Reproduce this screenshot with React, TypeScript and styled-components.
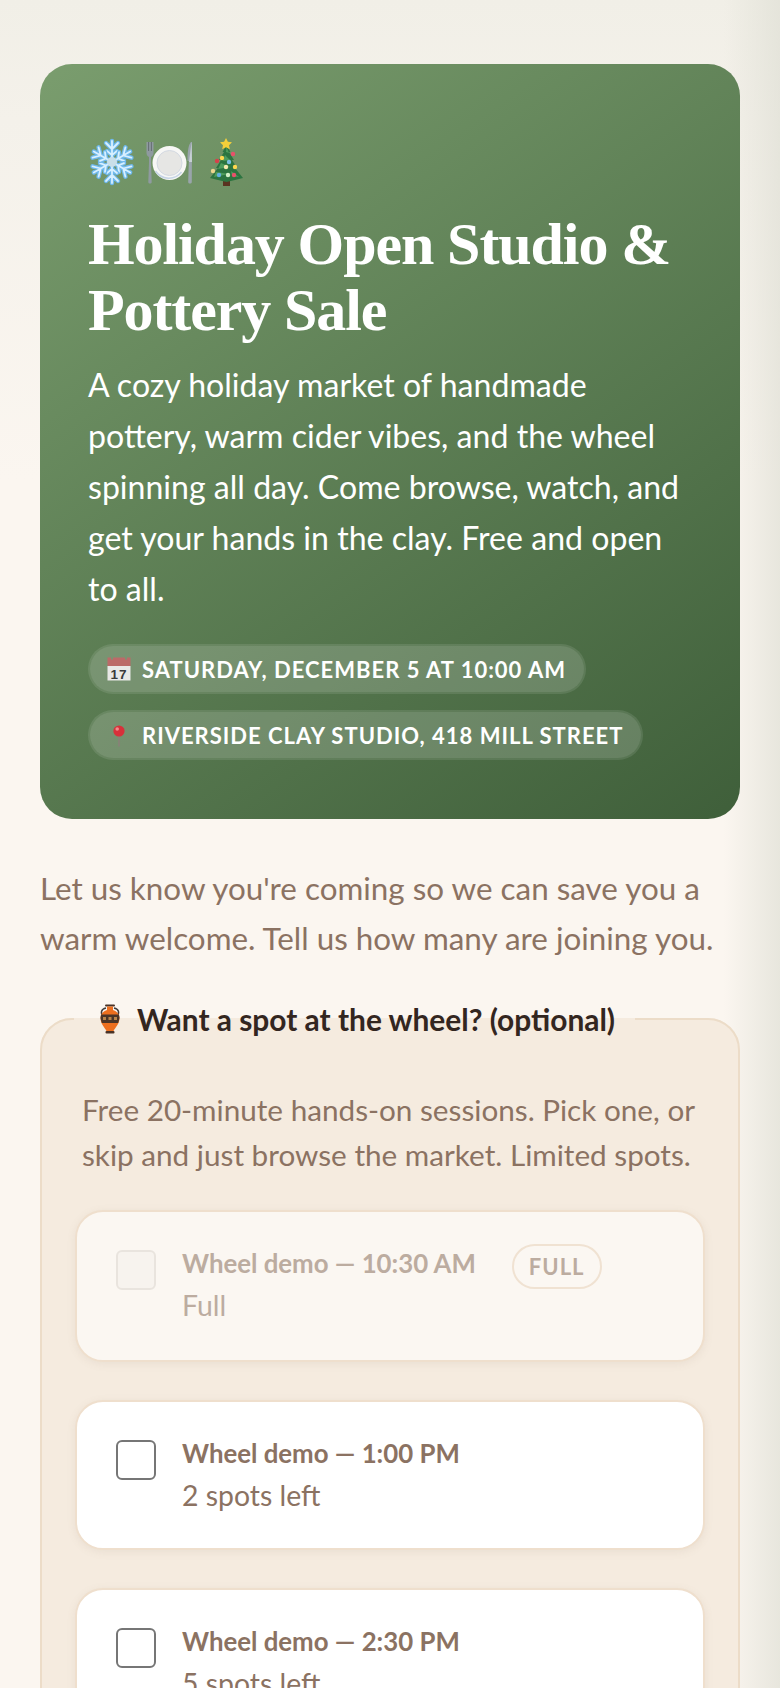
import styled, { createGlobalStyle } from 'styled-components'

const GlobalStyle = createGlobalStyle`
  * {
    box-sizing: border-box;
  }
  html,
  body {
    margin: 0;
    padding: 0;
    background: #fbf6f0;
  }
`

const Snowflake = () => {
  const arms = [0, 60, 120, 180, 240, 300]
  return (
    <EmojiSvg viewBox="0 0 48 48" size={48}>
      {arms.map((deg) => (
        <g key={deg} transform={`rotate(${deg} 24 24)`} fill="none" strokeLinecap="round">
          <path d="M24 24V3M24 11l-6-6M24 11l6-6M24 17l-5-4M24 17l5-4" stroke="#6fb9ec" strokeWidth="4.4" />
          <path d="M24 24V3M24 11l-6-6M24 11l6-6M24 17l-5-4M24 17l5-4" stroke="#d8f0ff" strokeWidth="1.8" />
        </g>
      ))}
      <circle cx="24" cy="24" r="5" fill="#c9dfe9" />
    </EmojiSvg>
  )
}

const PlateSet = () => (
  <EmojiSvg viewBox="0 0 48 48" size={48}>
    <path d="M1.500 4v11c0 2.500 1.500 3.500 2.500 4v5l-.7 20c0 2 3.400 2 3.400 0L6 24v-5c1-.5 2.500-1.500 2.500-4V4" fill="#8f9aa0" />
    <path d="M3.600 4v9M6.400 4v9" stroke="#5f686d" strokeWidth=".9" />
    <circle cx="24.500" cy="25" r="17" fill="#f7f7f5" />
    <circle cx="24.500" cy="25" r="12.500" fill="#e6e6e4" stroke="#d3d9e2" />
    <path d="M10.500 33a16 16 0 0 0 26 1" fill="none" stroke="#c6d4e6" strokeWidth="1.400" />
    <path d="M46 4c-2 2-3.500 7-3.500 19h1.300l-.6 21c0 2 3.600 2 3.600 0L47 4z" fill="#99a4ab" />
    <path d="M46.600 4 47 24h-3z" fill="#c7d0d5" />
  </EmojiSvg>
)

const Tree = () => {
  const balls: [number, number, string][] = [
    [31, 16, '#e8506a'],
    [20, 20, '#ffd84f'],
    [15, 23, '#d8404a'],
    [27, 24, '#79bde0'],
    [24, 29, '#f6eab0'],
    [33, 29, '#ffd84f'],
    [11, 33, '#ecd68e'],
    [17, 37, '#62b0e0'],
    [26, 37, '#d4f0c8'],
    [32, 37, '#e8506a'],
  ]
  return (
    <EmojiSvg viewBox="0 0 48 48" size={48}>
      <rect x="21" y="41" width="7" height="7" fill="#5a3320" />
      <path d="M24.500 7 28.500 14H27L32 22H30L35 30H33L41 40 33 42 24.500 44 16 42 8 40 16 30H14L19 22H17L22 14H20.500z" fill="#2c7440" />
      <path d="M24.500 9 27 15l-3-1zM23 17l5 5-7 1zM19 25l9 4-12 2zM14 34l13 2-15 3zM29 33l8 6-7-1z" fill="#4f9c5c" />
      <path d="m24 0 1.900 3.800 4.100.5-3 2.900.8 4.100-3.800-2-3.800 2 .8-4.100-3-2.900 4.100-.5z" fill="#f5cf3a" />
      {balls.map(([cx, cy, fill]) => (
        <circle key={`${cx}-${cy}`} cx={cx} cy={cy} r="2.200" fill={fill} />
      ))}
    </EmojiSvg>
  )
}

const CalendarGlyph = () => (
  <EmojiSvg viewBox="0 0 24 24" size={24}>
    <rect x="0.500" y="9" width="23" height="14.500" fill="#e8e8e6" />
    <path d="M.5.500h3.500v2h2v-2h12v2h2v-2h3.500V9H.5z" fill="#bb6a68" />
    <text x="12" y="21.500" textAnchor="middle" fontFamily="'Liberation Sans', sans-serif" fontSize="13.500" fill="#3a3a3a">
      17
    </text>
  </EmojiSvg>
)

const PinGlyph = () => (
  <EmojiSvg viewBox="0 0 24 24" size={24}>
    <path d="M12 12v11" stroke="#8a8078" strokeWidth="1.600" strokeLinecap="round" />
    <circle cx="12" cy="8" r="5.600" fill="#d8303a" />
    <circle cx="10.200" cy="6" r="1.800" fill="#f08a8a" />
  </EmojiSvg>
)

const Amphora = () => (
  <EmojiSvg viewBox="0 0 32 32" size={32}>
    <g transform="translate(4 0)">
      <path d="M8 5C3 6 2 10 5.500 14M16 5c5 1 6 5 2.500 9" fill="none" stroke="#3d3a3a" strokeWidth="1.500" />
      <rect x="7" y="1.500" width="10" height="2" rx="1" fill="#4a3226" />
      <path d="M9 3.500h6V7c3 1 6.500 3.500 6.500 8 0 6-4 9-6 13h-7c-2-4-6-7-6-13 0-4.500 3.500-7 6.500-8z" fill="#ec6f1f" />
      <path d="M3 11.500h18l.5 3.500-1.300 5H3.800L2.500 15z" fill="#4a3528" />
      <path d="M5 14h3v3H5zM10.500 14h3v3h-3zM16 14h3v3h-3z" fill="#b8834a" />
      <rect x="7.500" y="28" width="9" height="2.500" rx="1" fill="#4a3226" />
    </g>
  </EmojiSvg>
)

const slots = [
  { time: 'Wheel demo — 10:30 AM', left: 'Full', full: true },
  { time: 'Wheel demo — 1:00 PM', left: '2 spots left', full: false },
  { time: 'Wheel demo — 2:30 PM', left: '5 spots left', full: false },
]

const App = () => {
  return (
    <Page>
      <GlobalStyle />
      <Hero>
        <EmojiRow>
          <Snowflake />
          <PlateSet />
          <Tree />
        </EmojiRow>
        <Title>Holiday Open Studio &amp; Pottery Sale</Title>
        <Lead>
          A cozy holiday market of handmade pottery, warm cider vibes, and the wheel spinning all day. Come browse,
          watch, and get your hands in the clay. Free and open to all.
        </Lead>
        <Chips>
          <Chip>
            <CalendarGlyph />
            Saturday, December 5 at 10:00 AM
          </Chip>
          <Chip>
            <PinGlyph />
            Riverside Clay Studio, 418 Mill Street
          </Chip>
        </Chips>
      </Hero>
      <Intro>Let us know you're coming so we can save you a warm welcome. Tell us how many are joining you.</Intro>
      <WheelSet>
        <WheelLegend>
          <Amphora />
          Want a spot at the wheel? (optional)
        </WheelLegend>
        <Help>Free 20-minute hands-on sessions. Pick one, or skip and just browse the market. Limited spots.</Help>
        <SlotList>
          {slots.map((slot) => (
            <Slot key={slot.time} $full={slot.full}>
              <SlotCheck type="checkbox" disabled={slot.full} />
              <SlotText $full={slot.full}>
                <SlotTime>{slot.time}</SlotTime>
                <SlotLeft>{slot.left}</SlotLeft>
              </SlotText>
              {slot.full && <FullBadge>Full</FullBadge>}
            </Slot>
          ))}
        </SlotList>
      </WheelSet>
    </Page>
  )
}

export default App

const Page = styled.div`
  height: 1688px;
  overflow: hidden;
  padding: 64px 40px 0;
  font-family: 'Lato', 'Liberation Sans', sans-serif;
  background:
    linear-gradient(to left, rgba(224, 224, 214, 0.72), rgba(224, 224, 214, 0) 56px),
    linear-gradient(to bottom, #f1efe7 0, #f4f1ea 120px, #fbf6f0 480px);
`
const EmojiSvg = styled.svg<{ size: number }>`
  width: ${({ size }) => size}px;
  height: ${({ size }) => size}px;
  flex: none;
  display: block;
`
const Hero = styled.section`
  height: 755px;
  padding: 74px 48px 0;
  border-radius: 32px;
  background: linear-gradient(145deg, #7a9d6e 0%, #3f5f3a 100%);
  color: #fff;
`
const EmojiRow = styled.div`
  display: flex;
  gap: 9px;
  height: 48px;
`
const Title = styled.h1`
  margin: 25px 0 16px;
  font-family: 'Liberation Serif', serif;
  font-size: 60px;
  font-weight: 700;
  line-height: 66px;
  letter-spacing: -1.1px;
`
const Lead = styled.p`
  margin: 0;
  font-size: 32.1px;
  line-height: 51px;
  font-weight: 400;
`
const Chips = styled.div`
  display: flex;
  flex-direction: column;
  align-items: flex-start;
  gap: 16px;
  margin-top: 30px;
`
const Chip = styled.span`
  display: inline-flex;
  align-items: center;
  gap: 11px;
  height: 50px;
  padding: 0 18px 0 17px;
  border-radius: 25px;
  border: 2px solid rgba(255, 255, 255, 0.1);
  background: rgba(255, 255, 255, 0.18);
  background-clip: padding-box;
  font-size: 22px;
  font-weight: 700;
  letter-spacing: 1px;
  text-transform: uppercase;
`
const Intro = styled.p`
  margin: 44px 0 0;
  font-size: 31.4px;
  line-height: 50px;
  color: #8b7262;
`
const WheelSet = styled.fieldset`
  margin: 38px 0 0;
  padding: 0 33px 32px;
  border: 2px solid #ecdcc8;
  border-radius: 32px;
  background: #f5ebdf;
  min-inline-size: 0;
`
const WheelLegend = styled.legend`
  display: flex;
  align-items: center;
  gap: 11px;
  margin-left: -1px;
  padding: 0 20px;
  font-size: 29.9px;
  font-weight: 700;
  color: #33261f;
`
const Help = styled.p`
  margin: 50px 0 0;
  padding: 0 7px;
  font-size: 29.7px;
  line-height: 45px;
  color: #8b7262;
`
const SlotList = styled.div`
  display: flex;
  flex-direction: column;
  gap: 38px;
  margin-top: 33px;
`
const Slot = styled.label<{ $full: boolean }>`
  display: flex;
  align-items: flex-start;
  min-height: ${({ $full }) => ($full ? 152 : 150)}px;
  padding: 32px 38px 0 39px;
  border: 2px solid #efdfcd;
  border-radius: 28px;
  background: ${({ $full }) => ($full ? '#fbf7f2' : '#fff')};
  box-shadow: 0 2px 8px rgba(139, 114, 98, 0.1);
`
const SlotCheck = styled.input`
  appearance: none;
  flex: none;
  width: 40px;
  height: 40px;
  margin: 6px 26px 0 0;
  border: 2px solid #767676;
  border-radius: 6px;
  background: #fff;
  &:disabled {
    border-color: #e9e4de;
    background: #f7f3ee;
  }
`
const SlotText = styled.span<{ $full: boolean }>`
  display: flex;
  flex-direction: column;
  color: ${({ $full }) => ($full ? '#bcaca0' : '#8b7262')};
`
const SlotTime = styled.span`
  font-size: 25.8px;
  font-weight: 700;
  line-height: 38px;
`
const SlotLeft = styled.span`
  font-size: 28.400px;
  line-height: 46px;
`
const FullBadge = styled.span`
  margin: 0 0 0 36px;
  height: 45px;
  padding: 0 15px;
  display: inline-flex;
  align-items: center;
  border: 2px solid #f0e2d2;
  border-radius: 23px;
  font-size: 22px;
  font-weight: 700;
  letter-spacing: 1px;
  text-transform: uppercase;
  color: #bcaca0;
`
